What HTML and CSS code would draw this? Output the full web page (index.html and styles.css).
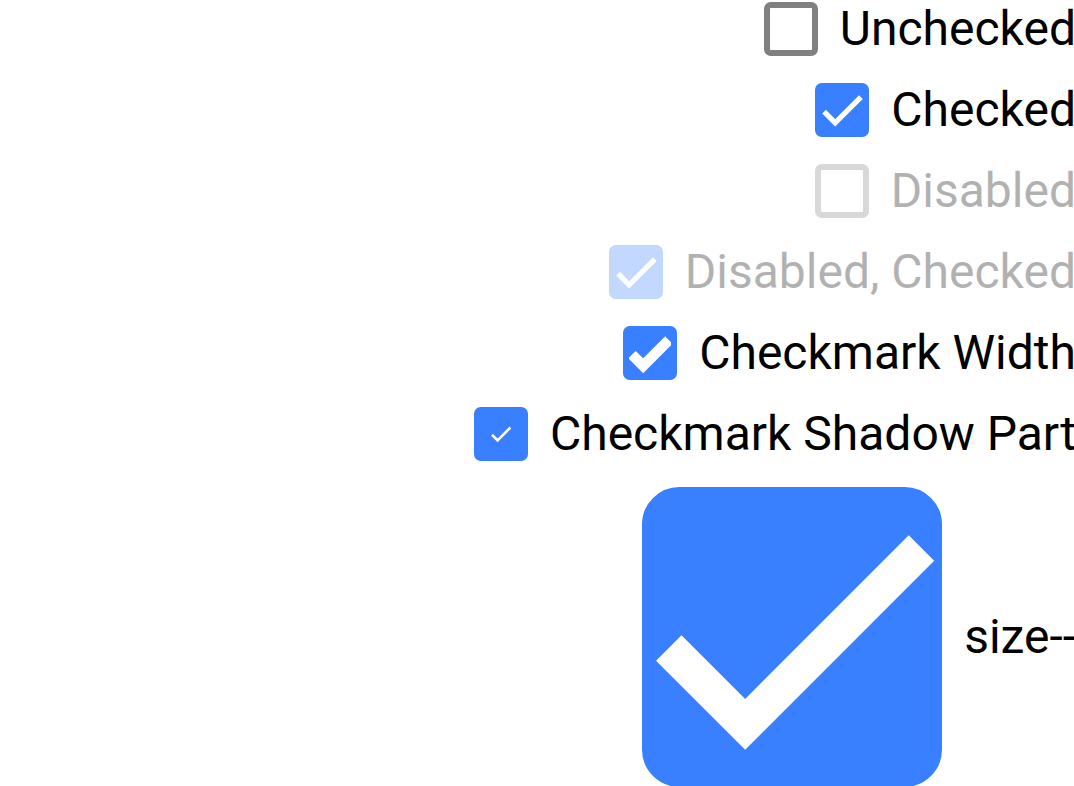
FILE: index.html
```html
<!DOCTYPE html>
<html lang="en">
<head>
<meta charset="utf-8">
<title>Checkbox</title>
<link rel="stylesheet" href="styles.css">
</head>
<body>
<main class="list">
  <div class="row">
    <span class="box"></span>
    <span class="label">Unchecked</span>
  </div>
  <div class="row">
    <span class="box checked"><svg class="mark" viewBox="0 0 24 24"><path d="M1.73,12.91 8.1,19.28 22.79,4.59"/></svg></span>
    <span class="label">Checked</span>
  </div>
  <div class="row disabled">
    <span class="box"></span>
    <span class="label">Disabled</span>
  </div>
  <div class="row disabled">
    <span class="box checked"><svg class="mark" viewBox="0 0 24 24"><path d="M1.73,12.91 8.1,19.28 22.79,4.59"/></svg></span>
    <span class="label">Disabled, Checked</span>
  </div>
  <div class="row">
    <span class="box checked"><svg class="mark wide" viewBox="0 0 24 24"><path d="M1.73,12.91 8.1,19.28 22.79,4.59"/></svg></span>
    <span class="label">Checkmark Width</span>
  </div>
  <div class="row">
    <span class="box checked"><svg class="mark shadow-part" viewBox="0 0 24 24"><path d="M1.73,12.91 8.1,19.28 22.79,4.59"/></svg></span>
    <span class="label">Checkmark Shadow Part</span>
  </div>
  <div class="row big-row">
    <span class="box checked big"><svg class="mark" viewBox="0 0 24 24"><path d="M1.73,12.91 8.1,19.28 22.79,4.59"/></svg></span>
    <span class="label" dir="rtl">--size</span>
  </div>
</main>
</body>
</html>
```
FILE: styles.css
```css
html, body {
  margin: 0;
  padding: 0;
  background: #ffffff;
  overflow: hidden;
}

body {
  width: 1074px;
  height: 786px;
  font-family: Roboto, "Liberation Sans", sans-serif;
}

.list {
  display: flex;
  flex-direction: column;
  align-items: flex-end;
  gap: 27px;
  padding-top: 2px;
  margin-right: -2px;
}

.row {
  display: flex;
  align-items: center;
  gap: 22px;
}

.big-row {
  margin-top: -1px;
}

.disabled {
  opacity: 0.3;
}

.box {
  box-sizing: border-box;
  width: 54px;
  height: 54px;
  flex: none;
  border: 6px solid #808080;
  border-radius: 6.75px;
  background: #ffffff;
  overflow: hidden;
  display: block;
}

.box.checked {
  background: #3880ff;
  border-color: #3880ff;
}

.box.big {
  width: 300px;
  height: 300px;
  border-radius: 37.5px;
}

.mark {
  display: block;
  width: 100%;
  height: 100%;
  fill: none;
  stroke: #ffffff;
  stroke-width: 3;
}

.mark.wide {
  stroke-width: 6;
}

.mark.shadow-part {
  transform: scale(0.5);
}

.label {
  font-size: 48px;
  line-height: 54px;
  color: #000000;
  white-space: nowrap;
}
```
